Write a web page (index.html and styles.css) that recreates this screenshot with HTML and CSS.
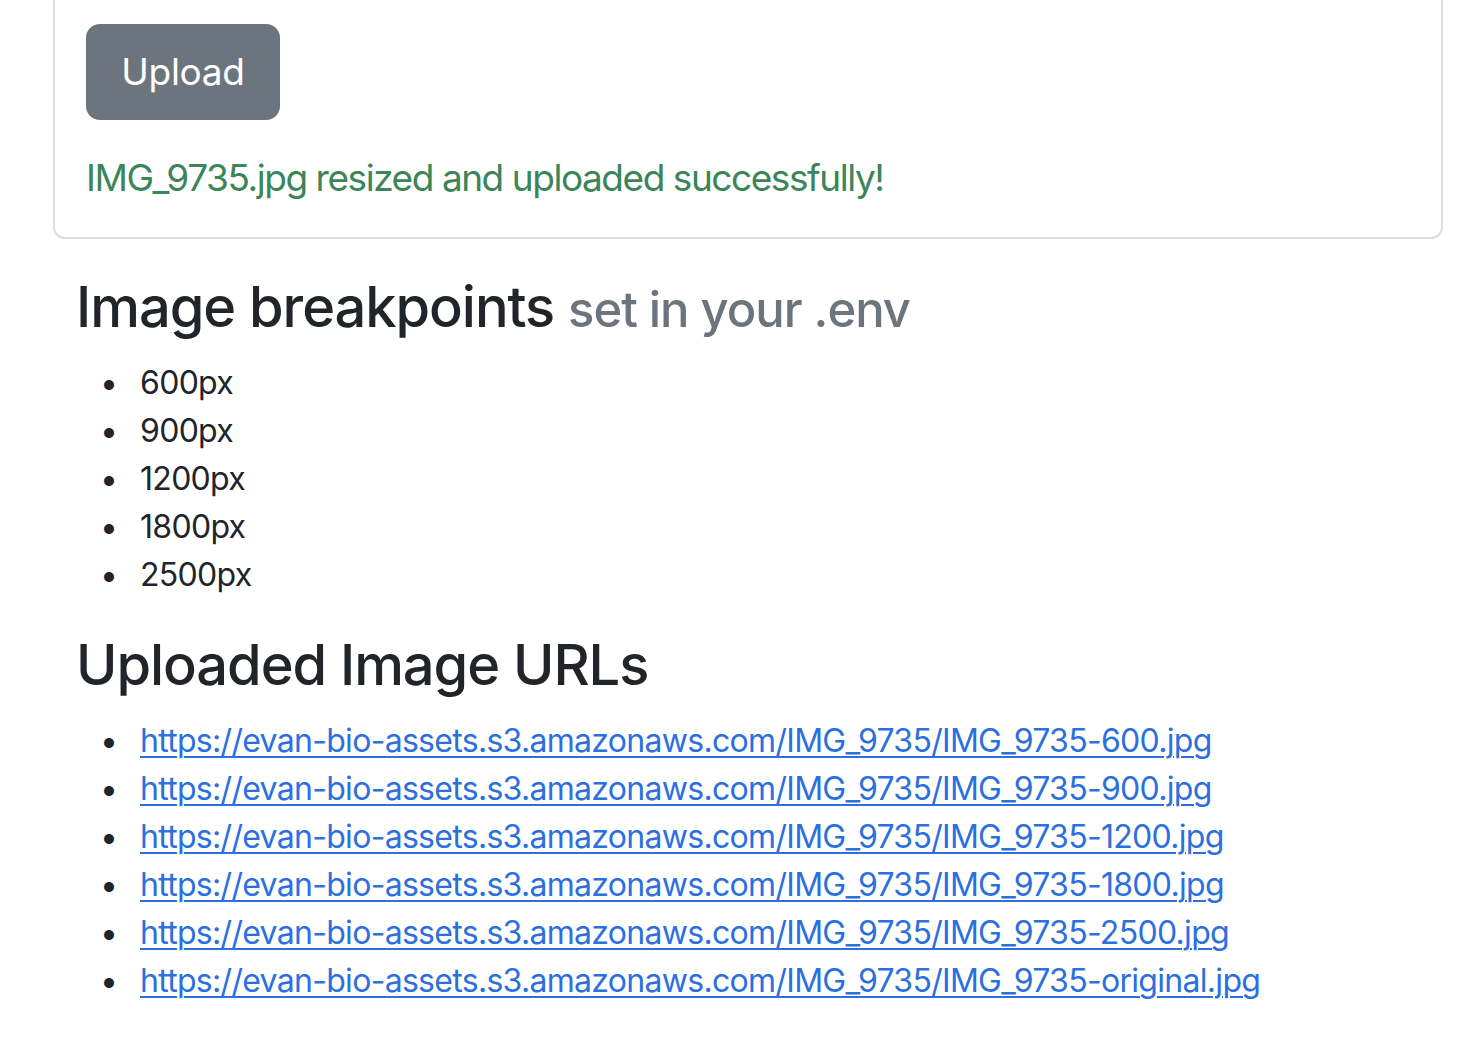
FILE: index.html
```html
<!DOCTYPE html>
<html lang="en">
<head>
<meta charset="utf-8">
<title>Image uploader</title>
<link rel="stylesheet" href="styles.css">
</head>
<body>
<main class="page">
  <section class="card">
    <button class="btn" type="button">Upload</button>
    <p class="success">IMG_9735.jpg resized and uploaded successfully!</p>
  </section>
  <section class="content">
    <h3 class="heading">Image breakpoints <small class="muted">set in your .env</small></h3>
    <ul class="list">
      <li>600px</li>
      <li>900px</li>
      <li>1200px</li>
      <li>1800px</li>
      <li>2500px</li>
    </ul>
    <h3 class="heading">Uploaded Image URLs</h3>
    <ul class="list">
      <li><a class="link" href="#">https://evan-bio-assets.s3.amazonaws.com/IMG_9735/IMG_9735-600.jpg</a></li>
      <li><a class="link" href="#">https://evan-bio-assets.s3.amazonaws.com/IMG_9735/IMG_9735-900.jpg</a></li>
      <li><a class="link" href="#">https://evan-bio-assets.s3.amazonaws.com/IMG_9735/IMG_9735-1200.jpg</a></li>
      <li><a class="link" href="#">https://evan-bio-assets.s3.amazonaws.com/IMG_9735/IMG_9735-1800.jpg</a></li>
      <li><a class="link" href="#">https://evan-bio-assets.s3.amazonaws.com/IMG_9735/IMG_9735-2500.jpg</a></li>
      <li><a class="link" href="#">https://evan-bio-assets.s3.amazonaws.com/IMG_9735/IMG_9735-original.jpg</a></li>
    </ul>
  </section>
</main>
</body>
</html>
```
FILE: styles.css
```css
* { box-sizing: border-box; }
html, body { margin: 0; padding: 0; background: #fff; }
body {
  font-family: Inter, "Noto Sans", "Liberation Sans", sans-serif;
  font-size: 32px;
  line-height: 1.5;
  color: #212529;
  letter-spacing: -0.7px;
}
.page {
  padding: 0 21px 0 53px;
}
.card {
  border: 2px solid #dedede;
  border-top: 0;
  border-radius: 0 0 12px 12px;
  padding: 24px 32px 29px 31px;
}
.btn {
  display: block;
  font-family: inherit;
  font-size: 37px;
  line-height: 60px;
  letter-spacing: -0.3px;
  padding: 0;
  color: #fff;
  background: #6c757d;
  border: 2px solid #6c757d;
  border-radius: 14px;
  height: 96px;
  width: 194px;
  text-align: center;
}
.success {
  margin: 28px 0 0;
  font-size: 37px;
  line-height: 60px;
  letter-spacing: -1.45px;
  color: #3b8558;
}
.content {
  padding-left: 23px;
  padding-top: 35px;
}
.heading {
  margin: 0 0 18px;
  font-size: 56px;
  line-height: 1.2;
  font-weight: 500;
  letter-spacing: -1.05px;
}
.muted {
  font-size: 0.875em;
  color: #6c757d;
  font-weight: 500;
}
.list {
  margin: 0 0 33px;
  padding-left: 64px;
  list-style: none;
}
.list li { line-height: 48px; height: 48px; }
.list li::before {
  content: "\2022";
  display: inline-block;
  width: 40px;
  margin-left: -40px;
  line-height: 48px;
  color: #212529;
}
.link {
  color: #2c6fe0;
  text-decoration: underline;
  text-decoration-thickness: 2px;
  text-underline-offset: 4px;
}
```
